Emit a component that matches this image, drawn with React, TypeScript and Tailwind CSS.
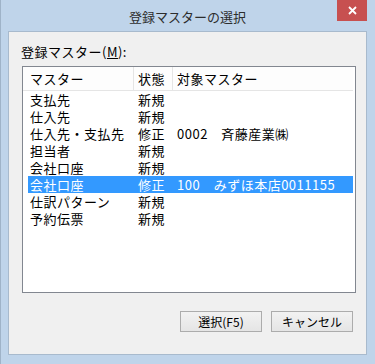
const rows = [
  { master: "支払先", state: "新規", target: "" },
  { master: "仕入先", state: "新規", target: "" },
  { master: "仕入先・支払先", state: "修正", target: "0002　斉藤産業㈱" },
  { master: "担当者", state: "新規", target: "" },
  { master: "会社口座", state: "新規", target: "" },
  { master: "会社口座", state: "修正", target: "100　みずほ本店0011155", selected: true },
  { master: "仕訳パターン", state: "新規", target: "" },
  { master: "予約伝票", state: "新規", target: "" },
];

const App = () => {
  return (
    <div className="w-[375px] h-[364px] bg-[#bfd4ea] border-l border-[#9fb3c8] flex flex-col font-['Noto_Sans_CJK_JP','Noto_Sans',sans-serif] overflow-hidden">
      {/* title bar */}
      <div className="relative h-[31px] flex items-center justify-center pt-[3px] -ml-px">
        <span className="text-[13px] text-[#2d2d2d]">登録マスターの選択</span>
        <div className="absolute top-0 right-[8px] w-[30px] h-[21px] bg-[#c75050] flex items-center justify-center">
          <svg width="9" height="9" viewBox="0 0 9 9">
            <path d="M1 1 L8 8 M8 1 L1 8" stroke="#fff" strokeWidth="1.8" />
          </svg>
        </div>
      </div>

      {/* client */}
      <div className="ml-[7px] mr-[8px] h-[324px] bg-[#f0f0f0] border border-[#a8bacd] flex flex-col pl-[13px] text-[13px] tracking-[0.5px] text-black">
        <div className="mt-[12px] -ml-px h-[16px] leading-[16px]">
          登録マスター(<span className="underline">M</span>):
        </div>

        <div className="mt-[6px] w-[334px] h-[227px] bg-white border border-[#828790] flex flex-col">
          <div className="h-[24px] flex border-b border-[#e5e5e5] bg-[#fdfdfd] leading-[23px] mr-[2px]">
            <div className="w-[111px] pl-[7px] border-r border-[#e5e5e5]">マスター</div>
            <div className="w-[39px] pl-[4px] border-r border-[#e5e5e5]">状態</div>
            <div className="flex-1 pl-[4px]">対象マスター</div>
          </div>
          {rows.map((r, i) => (
            <div
              key={i}
              className={
                r.selected
                  ? "ml-[5px] mr-[2px] h-[17px] leading-[17px] flex bg-[#3399ff] text-white"
                  : "ml-[5px] mr-[2px] h-[17px] leading-[17px] flex"
              }
            >
              <div className="w-[110px] pl-[2px] whitespace-nowrap">{r.master}</div>
              <div className="w-[39px] whitespace-nowrap">{r.state}</div>
              <div className="flex-1 whitespace-nowrap">{r.target}</div>
            </div>
          ))}
        </div>

        <div className="mt-[18px] mr-[13px] flex justify-end gap-[9px]">
          <button className="w-[82px] h-[21px] border border-[#acacac] bg-gradient-to-b from-[#f2f2f2] to-[#e5e5e5] text-[12px] tracking-normal leading-[19px]">
            選択(F5)
          </button>
          <button className="w-[82px] h-[21px] border border-[#acacac] bg-gradient-to-b from-[#f2f2f2] to-[#e5e5e5] text-[12px] tracking-normal leading-[19px]">
            キャンセル
          </button>
        </div>
      </div>
    </div>
  );
};

export default App;
